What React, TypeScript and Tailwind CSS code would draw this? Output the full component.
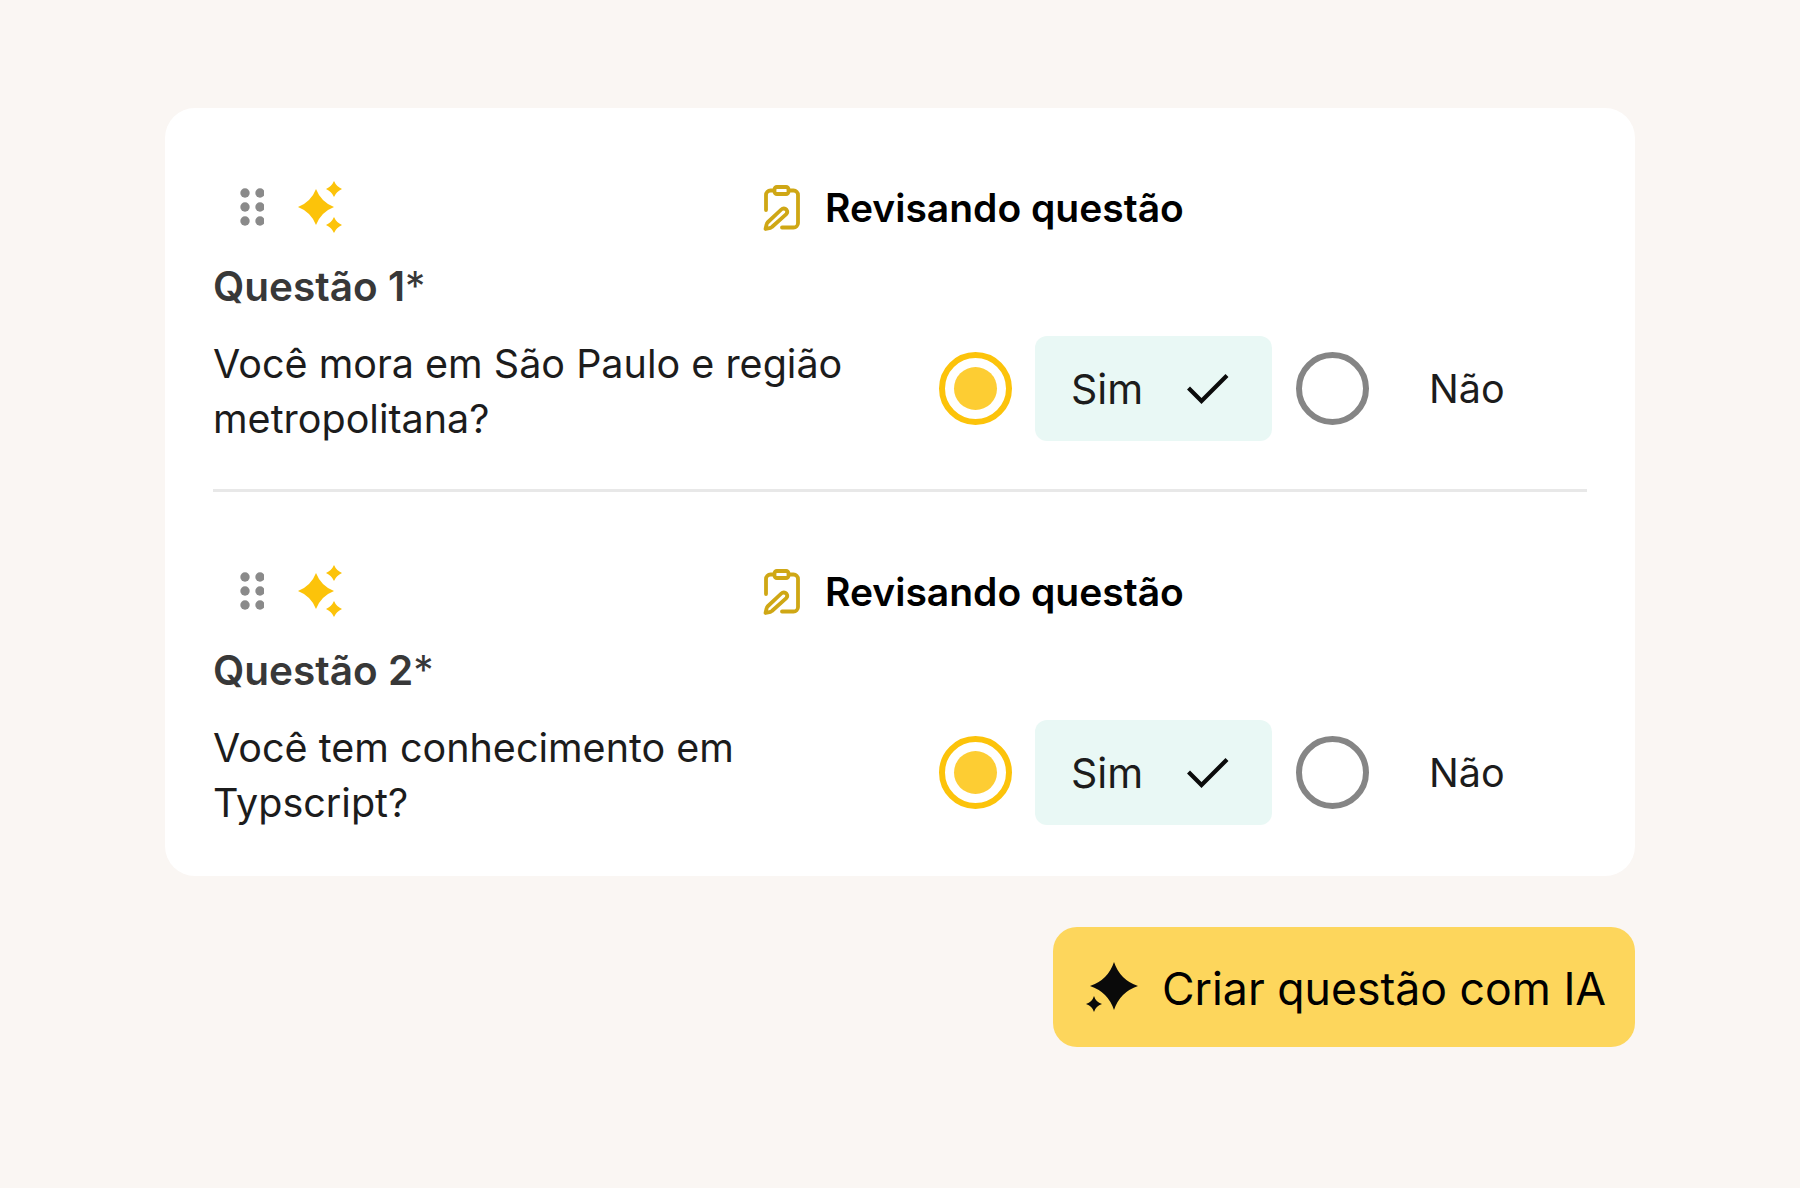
import React from "react";

const star = (cx: number, cy: number, r: number, k: number) =>
  `M${cx} ${cy - r}Q${cx + k} ${cy - k} ${cx + r} ${cy}Q${cx + k} ${cy + k} ${cx} ${cy + r}Q${cx - k} ${cy + k} ${cx - r} ${cy}Q${cx - k} ${cy - k} ${cx} ${cy - r}Z`;

function Dots() {
  return (
    <svg width="24" height="38" viewBox="0 0 24 38" fill="#8a8a8a" className="-translate-y-px">
      {[5, 19, 33].map((y) =>
        [5, 20].map((x) => <circle key={`${x}-${y}`} cx={x} cy={y} r="4.7" />)
      )}
    </svg>
  );
}

function Sparkles() {
  return (
    <svg width="44" height="54" viewBox="0 0 44 54" fill="#fcc30a" className="-translate-y-px">
      <path d={star(18, 27, 18, 5)} />
      <path d={star(36, 9, 8, 2.4)} />
      <path d={star(36, 45, 8, 2.4)} />
    </svg>
  );
}

function ClipPen() {
  return (
    <svg width="38" height="46" viewBox="0 0 38 46" fill="none" stroke="#cfa715" strokeWidth="3.8" strokeLinecap="round" strokeLinejoin="round">
      <rect x="11.5" y="2" width="14" height="7" rx="2.4" />
      <path d="M11 5.5H7.5a4.5 4.5 0 0 0-4.5 4.5v15" />
      <path d="M26 5.5h4.5a4.5 4.5 0 0 1 4.5 4.5v28a4.5 4.5 0 0 1-4.5 4.5H19" />
      <path d="M23.4 24.6a3.6 3.6 0 0 0-5.1-.1L4.5 37.5a3 3 0 0 0-.8 1.5L2.5 44l5-1.2a3 3 0 0 0 1.4-.8l14.4-12.9a3.6 3.6 0 0 0 .1-4.5Z" />
    </svg>
  );
}

function Check() {
  return (
    <svg width="42" height="32" viewBox="0 0 42 32" fill="none" stroke="#0b0b0b" strokeWidth="4.2" strokeLinecap="square">
      <path d="M3 16.5 14.5 28 38.5 4" />
    </svg>
  );
}

function Question({ n, lines }: { n: number; lines: string[] }) {
  return (
    <div className="flex flex-col">
      <div className="flex h-[54px] items-center">
        <div className="flex w-[550px] items-center gap-[34px] pl-[27px]">
          <Dots />
          <Sparkles />
        </div>
        <div className="flex items-center gap-[24px]">
          <ClipPen />
          <span className="text-[39px] leading-[46px] font-semibold text-black">Revisando questão</span>
        </div>
      </div>
      <div className="mt-[29px] text-[40.5px] leading-[46px] font-semibold text-[#383838]">
        Questão {n}
        <span className="font-normal">*</span>
      </div>
      <div className="mt-[26px] flex items-start">
        <div className="mt-[1px] w-[726px] text-[39.5px] leading-[54.5px] text-[#1c1c1c]">
          {lines.map((l) => (
            <div key={l}>{l}</div>
          ))}
        </div>
        <div className="flex h-[105px] items-center">
          <div className="flex h-[73px] w-[73px] items-center justify-center rounded-full border-[6px] border-[#fcc30a]">
            <div className="h-[43px] w-[43px] rounded-full bg-[#fdcd33]" />
          </div>
          <div className="ml-[23px] flex h-[105px] w-[237px] items-center rounded-[12px] bg-[#e9f8f5] pl-[36px]">
            <span className="mt-[2px] w-[116px] text-[41px] text-[#1c1c1c]">Sim</span>
            <Check />
          </div>
          <div className="ml-[24px] h-[73px] w-[73px] rounded-full border-[6px] border-[#858585]" />
          <span className="mt-[2px] ml-[60px] text-[39.5px] text-[#1c1c1c]">Não</span>
        </div>
      </div>
    </div>
  );
}

export default function App() {
  return (
    <div className="h-[1188px] w-[1800px] bg-[#faf6f3] pt-[108px] pl-[165px] font-['Inter',sans-serif]">
      <div className="h-[768px] w-[1470px] rounded-[30px] bg-white px-[48px] pt-[73px]">
        <Question n={1} lines={["Você mora em São Paulo e região", "metropolitana?"]} />
        <div className="mt-[43px] mb-[73px] h-[3px] bg-[#e8e8e8]" />
        <Question n={2} lines={["Você tem conhecimento em", "Typscript?"]} />
      </div>
      <div className="mt-[51px] ml-[888px] flex h-[120px] w-[582px] items-center rounded-[24px] bg-[#fdd65c] pl-[33px]">
        <svg width="52" height="52" viewBox="0 0 52 52" fill="#0a0a0a">
          <path d={star(28, 25, 24, 6)} />
          <path d={star(8, 43, 8, 1.8)} />
        </svg>
        <span className="mt-[4px] ml-[24px] text-[44.6px] leading-none text-black">Criar questão com IA</span>
      </div>
    </div>
  );
}
